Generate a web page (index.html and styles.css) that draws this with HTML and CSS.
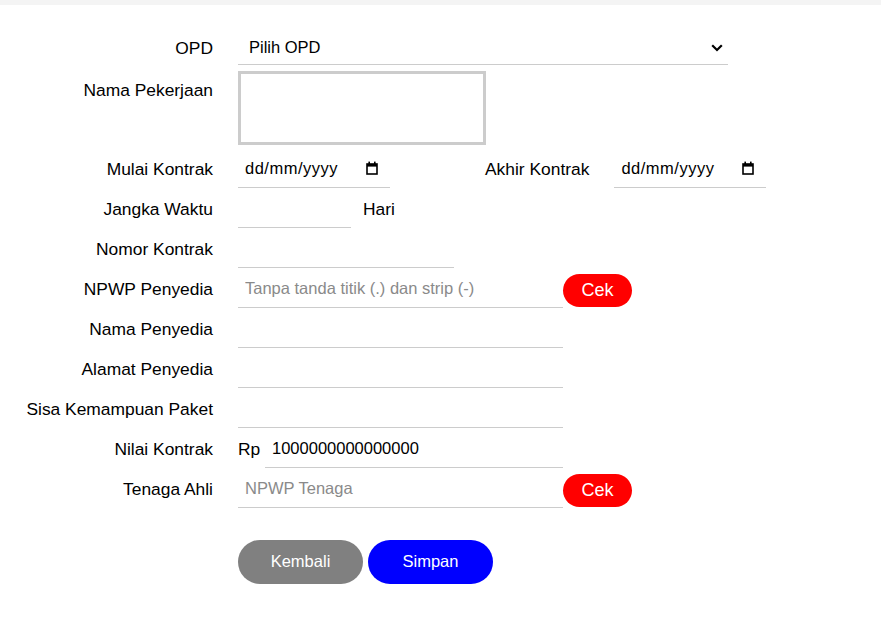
FILE: index.html
```html
<!DOCTYPE html>
<html lang="id">
<head>
<meta charset="utf-8">
<title>Form Kontrak</title>
<link rel="stylesheet" href="styles.css">
</head>
<body>
<div class="topbar"></div>
<form class="form">
  <div class="row">
    <label class="lbl">OPD</label>
    <div class="field">
      <div class="select-wrap">
        <select class="select"><option>Pilih OPD</option></select>
        <svg class="chev" width="12" height="8" viewBox="0 0 12 8" aria-hidden="true"><path d="M1.2 1.2 L6 6 L10.8 1.2" fill="none" stroke="#000" stroke-width="2.2"/></svg>
      </div>
    </div>
  </div>
  <div class="row row-area">
    <label class="lbl">Nama Pekerjaan</label>
    <div class="field"><textarea class="area"></textarea></div>
  </div>
  <div class="row">
    <label class="lbl">Mulai Kontrak</label>
    <div class="field">
      <div class="date w-date">
        <span class="date-text">dd/mm/yyyy</span>
        <svg class="cal" width="12" height="14" viewBox="0 0 12 14" aria-hidden="true"><rect x="1" y="3" width="10" height="10" fill="none" stroke="#000" stroke-width="1.6"/><rect x="1" y="3" width="10" height="2.6" fill="#000"/><rect x="2.4" y="0.6" width="1.6" height="3" fill="#000"/><rect x="8" y="0.6" width="1.6" height="3" fill="#000"/></svg>
      </div>
      <span class="inline-lbl akhir">Akhir Kontrak</span>
      <div class="date w-date gap25">
        <span class="date-text">dd/mm/yyyy</span>
        <svg class="cal" width="12" height="14" viewBox="0 0 12 14" aria-hidden="true"><rect x="1" y="3" width="10" height="10" fill="none" stroke="#000" stroke-width="1.6"/><rect x="1" y="3" width="10" height="2.6" fill="#000"/><rect x="2.4" y="0.6" width="1.6" height="3" fill="#000"/><rect x="8" y="0.6" width="1.6" height="3" fill="#000"/></svg>
      </div>
    </div>
  </div>
  <div class="row">
    <label class="lbl">Jangka Waktu</label>
    <div class="field">
      <input class="inp w-113" type="text">
      <span class="inline-lbl hari">Hari</span>
    </div>
  </div>
  <div class="row">
    <label class="lbl">Nomor Kontrak</label>
    <div class="field"><input class="inp w-216" type="text"></div>
  </div>
  <div class="row">
    <label class="lbl">NPWP Penyedia</label>
    <div class="field">
      <input class="inp w-325" type="text" placeholder="Tanpa tanda titik (.) dan strip (-)">
      <button type="button" class="btn-cek">Cek</button>
    </div>
  </div>
  <div class="row">
    <label class="lbl">Nama Penyedia</label>
    <div class="field"><input class="inp w-325" type="text"></div>
  </div>
  <div class="row">
    <label class="lbl">Alamat Penyedia</label>
    <div class="field"><input class="inp w-325" type="text"></div>
  </div>
  <div class="row">
    <label class="lbl">Sisa Kemampuan Paket</label>
    <div class="field"><input class="inp w-325" type="text"></div>
  </div>
  <div class="row">
    <label class="lbl">Nilai Kontrak</label>
    <div class="field">
      <span class="inline-lbl rp">Rp</span>
      <input class="inp w-298" type="text" value="1000000000000000">
    </div>
  </div>
  <div class="row">
    <label class="lbl">Tenaga Ahli</label>
    <div class="field">
      <input class="inp w-325" type="text" placeholder="NPWP Tenaga">
      <button type="button" class="btn-cek">Cek</button>
    </div>
  </div>
  <div class="actions">
    <button type="button" class="btn btn-back">Kembali</button>
    <button type="button" class="btn btn-save">Simpan</button>
  </div>
</form>
</body>
</html>
```

FILE: styles.css
```css
* { box-sizing: border-box; }
body {
  margin: 0;
  font-family: "Liberation Sans", Arial, sans-serif;
  font-size: 17.4px;
  color: #000;
  background: #fff;
}
.topbar {
  height: 5px;
  background: #f4f4f4;
}
.form {
  padding-top: 22px;
}
.row {
  display: flex;
  align-items: flex-start;
}
.row-area {
  margin-top: 4px;
}
.lbl {
  width: 213px;
  flex-shrink: 0;
  text-align: right;
  padding-top: 11.5px;
  line-height: 19px;
}
.field {
  margin-left: 25px;
  display: flex;
  align-items: flex-start;
}
.select-wrap {
  position: relative;
  width: 490px;
}
.select {
  display: block;
  width: 490px;
  height: 38px;
  border: 0;
  border-bottom: 1px solid #ccc;
  border-radius: 0;
  background: #fff;
  -webkit-appearance: none;
  appearance: none;
  font: inherit;
  font-size: 16.5px;
  padding: 2px 30px 0 11px;
  color: #000;
}
.chev {
  position: absolute;
  right: 5px;
  top: 17px;
  pointer-events: none;
}
.area {
  display: block;
  width: 248px;
  height: 74px;
  margin: 2px 0 3px;
  border: 3px solid #ccc;
  resize: none;
  font: inherit;
}
.inp {
  height: 40px;
  border: 0;
  border-bottom: 1px solid #ccc;
  padding: 2px 7px 0;
  font: inherit;
  font-size: 16.5px;
  color: #000;
  background: #fff;
}
.inp::placeholder { color: #8a8a8a; }
.date {
  height: 40px;
  display: flex;
  align-items: center;
  justify-content: space-between;
  border-bottom: 1px solid #ccc;
  padding: 1px 12px 0 7px;
  font-size: 16.5px;
}
.date-text { letter-spacing: 0.5px; }
.cal { display: block; }
.w-date { width: 152px; }
.w-113 { width: 113px; }
.w-216 { width: 216px; }
.w-325 { width: 325px; }
.w-298 { width: 298px; }
.gap25 { margin-left: 25px; }
.inline-lbl {
  padding-top: 11.5px;
  line-height: 19px;
}
.akhir { margin-left: 95px; }
.hari { margin-left: 12px; }
.rp { width: 27px; }
.btn-cek {
  margin-top: 6px;
  width: 69px;
  height: 33px;
  border: 0;
  border-radius: 17px;
  background: #ff0000;
  color: #fff;
  font: inherit;
  font-size: 18px;
  padding: 0;
}
.actions {
  margin-top: 32px;
  margin-left: 238px;
  display: flex;
  gap: 5px;
}
.btn {
  width: 125px;
  height: 44px;
  border: 0;
  border-radius: 22px;
  color: #fff;
  font: inherit;
  font-size: 16.5px;
  padding: 0 0 2px;
}
.btn-back { background: #808080; }
.btn-save { background: #0000ff; }
```
